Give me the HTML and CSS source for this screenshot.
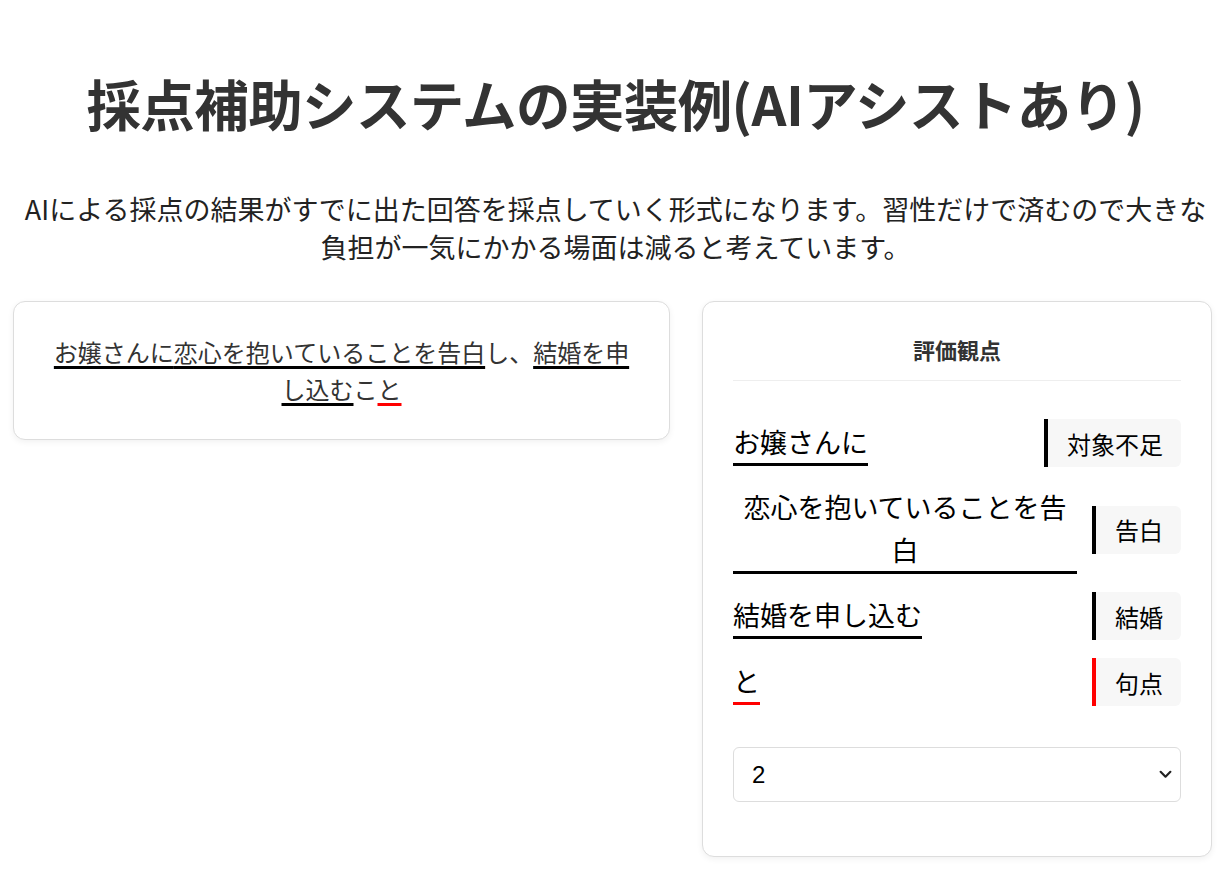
FILE: index.html
```html
<!DOCTYPE html>
<html lang="ja">
<head>
<meta charset="utf-8">
<title>採点補助システムの実装例(AIアシストあり)</title>
<link rel="stylesheet" href="styles.css">
</head>
<body>
<main class="page">
  <h1 class="title">採点補助システムの実装例(AIアシストあり)</h1>
  <p class="lead">AIによる採点の結果がすでに出た回答を採点していく形式になります。習性だけで済むので大きな負担が一気にかかる場面は減ると考えています。</p>
  <div class="columns">
    <section class="card answer">
      <p class="answer-text"><span class="u">お嬢さんに</span><span class="u">恋心を抱いていることを告白</span>し、<span class="u">結婚を申し込む</span>こ<span class="u red">と</span></p>
    </section>
    <section class="card criteria">
      <h2 class="criteria-title">評価観点</h2>
      <div class="rows">
        <div class="row">
          <div class="seg">お嬢さんに</div>
          <div class="tag">対象不足</div>
        </div>
        <div class="row">
          <div class="seg">恋心を抱いていることを告白</div>
          <div class="tag">告白</div>
        </div>
        <div class="row">
          <div class="seg">結婚を申し込む</div>
          <div class="tag">結婚</div>
        </div>
        <div class="row">
          <div class="seg red">と</div>
          <div class="tag red">句点</div>
        </div>
      </div>
      <div class="select-wrap">
        <select class="score">
          <option>0</option>
          <option>1</option>
          <option selected>2</option>
          <option>3</option>
        </select>
        <svg class="chev" viewBox="0 0 12 8" width="13" height="9"><path d="M1.5 1.5 L6 6 L10.5 1.5" fill="none" stroke="#222" stroke-width="2" stroke-linecap="round" stroke-linejoin="round"/></svg>
      </div>
    </section>
  </div>
</main>
</body>
</html>
```

FILE: styles.css
```css
* { box-sizing: border-box; }
html, body { margin: 0; padding: 0; background: #fff; }
body {
  font-family: "Noto Sans CJK JP", "Noto Sans", sans-serif;
  color: #333;
}
.page {
  padding: 0 13px 20px 13px;
}
.title {
  margin: 0;
  padding-top: 67px;
  font-size: 54.5px;
  line-height: 72px;
  font-weight: 700;
  text-align: center;
  color: #333;
  letter-spacing: -0.6px;
}
.lead {
  margin: 51px 0 0 0;
  font-size: 27px;
  line-height: 38px;
  text-align: center;
  color: #222;
}
.columns {
  margin-top: 35px;
  display: grid;
  grid-template-columns: 657px 510px;
  column-gap: 32px;
  align-items: start;
}
.card {
  border: 1px solid #ddd;
  border-radius: 12px;
  background: #fff;
  box-shadow: 0 2px 6px rgba(0,0,0,0.06);
}
.answer {
  padding: 31px 36px 32px;
}
.answer-text {
  margin: 0;
  font-size: 24px;
  line-height: 37px;
  text-align: center;
  color: #333;
}
.u {
  text-decoration: underline;
  text-decoration-color: #000;
  text-decoration-thickness: 3px;
  text-underline-offset: 4px;
  text-decoration-skip-ink: none;
}
.u.red { text-decoration-color: #f00; }
.criteria {
  padding: 30px 30px 54px;
}
.criteria-title {
  margin: 0;
  font-size: 22px;
  line-height: 34px;
  font-weight: 700;
  text-align: center;
  color: #333;
  padding-bottom: 14px;
  border-bottom: 1px solid #eee;
}
.rows {
  margin-top: 38px;
  display: flex;
  flex-direction: column;
  gap: 18px;
}
.row {
  display: flex;
  align-items: center;
  justify-content: space-between;
  gap: 15px;
}
.seg {
  font-size: 27px;
  line-height: 43px;
  color: #000;
  text-align: center;
  border-bottom: 3px solid #000;
}
.seg.red { border-bottom-color: #f00; }
.tag {
  flex: none;
  height: 48px;
  display: flex;
  align-items: center;
  padding: 0 18px 0 19px;
  background: #f7f7f7;
  border-left: 4px solid #000;
  border-radius: 0 6px 6px 0;
  font-size: 24px;
  color: #000;
}
.tag.red { border-left-color: #f00; }
.select-wrap {
  position: relative;
  margin-top: 41px;
}
.score {
  -webkit-appearance: none;
  appearance: none;
  width: 100%;
  height: 55px;
  border: 1px solid #ddd;
  border-radius: 6px;
  background: #fff;
  padding: 0 18px;
  font-family: "Liberation Sans", Arial, sans-serif;
  font-size: 24px;
  color: #000;
}
.chev {
  position: absolute;
  right: 9px;
  top: 23px;
  pointer-events: none;
}
```
